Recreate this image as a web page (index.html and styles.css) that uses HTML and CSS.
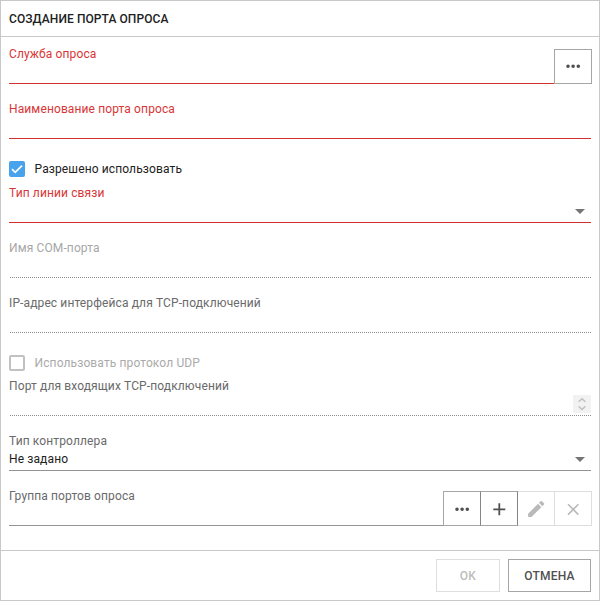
FILE: index.html
```html
<!DOCTYPE html>
<html lang="ru">
<head>
<meta charset="utf-8">
<title>Создание порта опроса</title>
<link rel="stylesheet" href="styles.css">
</head>
<body>
<div class="dialog">
  <header class="header"><span class="t-title">СОЗДАНИЕ ПОРТА ОПРОСА</span></header>
  <main class="content">
    <div class="field error">
      <div class="input"><span class="label t-service">Служба опроса</span></div>
      <div class="tools"><button class="tool"><svg viewBox="0 0 36 33"><path d="M13 16.3h.01M18.1 16.3h.01M23.3 16.3h.01" class="dots"/></svg></button></div>
    </div>
    <div class="field error"><div class="input"><span class="label t-name">Наименование порта опроса</span></div></div>
    <div class="check">
      <span class="box checked"><svg viewBox="0 0 16 16"><path d="M3 8.2l3.2 3.2L13 4.6"/></svg></span>
      <span class="t-allow">Разрешено использовать</span>
    </div>
    <div class="field error"><div class="input"><span class="label t-line">Тип линии связи</span><i class="arrow"></i></div></div>
    <div class="field readonly disabled"><div class="input"><span class="label t-com">Имя COM-порта</span></div></div>
    <div class="field readonly"><div class="input"><span class="label t-ip">IP-адрес интерфейса для TCP-подключений</span></div></div>
    <div class="check udp">
      <span class="box"></span>
      <span class="t-udp">Использовать протокол UDP</span>
    </div>
    <div class="field readonly"><div class="input"><span class="label t-port">Порт для входящих TCP-подключений</span>
      <span class="spin"><svg viewBox="0 0 18 18"><path d="M5.7 6.8L9 3.7l3.3 3.1M5.7 11.4L9 14.5l3.3-3.1"/></svg></span></div></div>
    <div class="field"><div class="input"><span class="label t-ctrl">Тип контроллера</span><span class="value t-value">Не задано</span><i class="arrow"></i></div></div>
    <div class="field">
      <div class="input"><span class="label t-group">Группа портов опроса</span></div>
      <div class="tools">
        <button class="tool"><svg viewBox="0 0 36 33"><path d="M13 17.3h.01M18.1 17.3h.01M23.3 17.3h.01" class="dots"/></svg></button>
        <button class="tool"><svg viewBox="0 0 36 33"><path d="M18.3 11.3v12M12.3 17.3h12" class="stroke"/></svg></button>
        <button class="tool off"><svg viewBox="0 0 36 33"><path d="M10 21.9V25h3.1l9.2-9.2-3.1-3.1zM24.7 13.4a.83.83 0 0 0 0-1.17l-1.95-1.95a.83.83 0 0 0-1.17 0l-1.52 1.52 3.12 3.12z" transform="translate(18 17) scale(1.08) translate(-17.3 -17.5)"/></svg></button>
        <button class="tool off"><svg viewBox="0 0 36 33"><path d="M13 12.2l10.4 10.4M23.4 12.2L13 22.6" class="thin"/></svg></button>
      </div>
    </div>
  </main>
  <footer class="footer">
    <button class="btn off"><span class="t-ok">OK</span></button>
    <button class="btn cancel"><span class="t-cancel">ОТМЕНА</span></button>
  </footer>
</div>
</body>
</html>
```
FILE: styles.css
```css
* { box-sizing: border-box; }
body { margin: 0; background: #fff; font: 400 12px/16px Roboto, sans-serif; letter-spacing: .12px; color: #212121; }
button { font: inherit; letter-spacing: .25px; margin: 0; padding: 0; background: #fff; }
svg { display: block; fill: none; }
.dialog { width: 600px; height: 601px; border: 1px solid #c8c8c8; display: flex; flex-direction: column; }
.header { height: 36px; flex: none; border-bottom: 1px solid #c8c8c8; padding: 10px 8px 0; font-weight: 500; letter-spacing: .08px; color: #212121; }
.content { flex: 1; padding: 9px 8px 0; }
.field { height: 38px; display: flex; align-items: flex-end; color: #6a6a6a; }
.field + .field { margin-top: 17px; }
.input { flex: 1; height: 38px; display: flex; flex-direction: column; border-bottom: 1px solid #949494; position: relative; white-space: nowrap; }
.label { align-self: flex-start; }
.value { align-self: flex-start; margin-top: 2px; color: #212121; }
.error { color: #d83636; }
.error .input { border-color: #d32f2f; }
.readonly .input { border-bottom-style: none; }
.readonly .input::after { content: ""; height: 1px; margin-top: auto; background: repeating-linear-gradient(90deg, transparent 0 1px, #8c8c8c 1px 2px); }
.disabled { color: #a6a6a6; }
.arrow { position: absolute; right: 6px; bottom: 8px; border: 5px solid transparent; border-top: 5px solid #757575; border-bottom: 0; }
.spin { position: absolute; right: 0; bottom: 3px; width: 18px; height: 18px; background: #f2f2f3; }
.spin path { stroke: #c1c1c1; stroke-width: 1.5; }
.tools { display: flex; height: 35px; margin-right: -1px; }
.tool { width: 38px; height: 35px; border: 1px solid #a6a6a6; color: #505050; }
.tool + .tool { margin-left: -1px; }
.tools .tool:nth-child(2) { border-color: #a6a6a6 #858585; }
.tool.off { border-color: #dedede; color: #b9b9b9; position: relative; z-index: -1; }
.tool path { fill: currentColor; }
.tool .dots { stroke: currentColor; stroke-width: 3.6; stroke-linecap: round; }
.tool .stroke { stroke: currentColor; stroke-width: 1.8; }
.tool .thin { stroke: currentColor; stroke-width: 1.6; }
.check { height: 46px; display: flex; gap: 10px; padding-top: 22px; }
.check.udp { height: 45px; color: #aaa; }
.box { width: 16px; height: 16px; border: 2px solid #c1c1c1; border-radius: 2px; margin-left: -.5px; }
.checked { border: 0; background: #48a3ec; }
.checked path { stroke: #fff; stroke-width: 1.7; }
.footer { height: 50px; border-top: 1px solid #c8c8c8; padding: 8px; display: flex; justify-content: flex-end; gap: 8px; font-weight: 500; }
.btn { width: 64px; height: 33px; border: 1px solid #a6a6a6; color: #505050; }
.cancel { width: 83px; }
.btn.off { border-color: #dedede; color: #bdbdbd; }
```
